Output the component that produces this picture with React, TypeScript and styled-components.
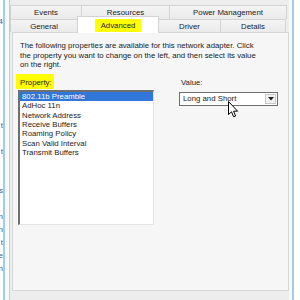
import React from "react";
import styled, { createGlobalStyle } from "styled-components";

const GlobalStyle = createGlobalStyle`
  html, body {
    margin: 0;
    padding: 0;
    width: 300px;
    height: 300px;
    overflow: hidden;
    background: #ffffff;
  }
  body {
    font-family: "Liberation Sans", Arial, sans-serif;
  }
`;

const Screen = styled.div`
  position: relative;
  display: flex;
  width: 300px;
  height: 300px;
  background: #ffffff;
  font-size: 7.8px;
  color: #1b1b1b;
`;

const BehindWindow = styled.div`
  width: 3px;
  height: 300px;
  overflow: hidden;
  display: flex;
  flex-direction: column;
  align-items: flex-end;
  padding-top: 18px;
  box-sizing: border-box;
  gap: 5px;
  color: #4a5a6a;
  font-size: 8px;
  line-height: 8px;
`;

const Fragment = styled.div`
  white-space: nowrap;
  display: flex;
  justify-content: flex-end;
  width: 3px;
`;

const WindowEdge = styled.div`
  width: 2px;
  background: #a3cbeb;
`;

const Gutter = styled.div<{ $w: number }>`
  width: ${(p) => p.$w}px;
  background: #f9f9f9;
`;

const Dialog = styled.div`
  width: 280px;
  box-sizing: border-box;
  border-left: 1px solid #c9c9c9;
  background: #ededed;
  padding-top: 5px;
  display: flex;
  flex-direction: column;
`;

const TabRow = styled.div<{ $h: number }>`
  display: flex;
  height: ${(p) => p.$h}px;
`;

const Tab = styled.div<{ $w: number; $active?: boolean }>`
  width: ${(p) => p.$w}px;
  box-sizing: border-box;
  display: flex;
  align-items: center;
  justify-content: center;
  border-top: 1px solid #d3d3d3;
  border-right: 1px solid #d3d3d3;
  background: ${(p) => (p.$active ? "#ffffff" : "linear-gradient(#f4f4f4, #eaeaea)")};
  height: ${(p) => (p.$active ? "17px" : "100%")};
  margin-top: ${(p) => (p.$active ? "-3px" : "0")};
  position: ${(p) => (p.$active ? "relative" : "static")};
  z-index: ${(p) => (p.$active ? 1 : "auto")};
  border-left: ${(p) => (p.$active ? "1px solid #d3d3d3" : "none")};
  margin-left: ${(p) => (p.$active ? "-1px" : "0")};
  &:first-child {
    border-left: 1px solid #d3d3d3;
  }
`;

const Marker = styled.span`
  background: #ffff00;
  line-height: 13px;
  padding: 0 5.5px;
`;

const Panel = styled.div`
  margin-left: 2px;
  width: 277px;
  height: 259px;
  box-sizing: border-box;
  border: 1px solid #d6d6d6;
  background: #f6f6f6;
  padding: 8px 5px 0 5px;
  display: flex;
  flex-direction: column;
`;

const Description = styled.div`
  margin-left: 2px;
  line-height: 9.6px;
  white-space: nowrap;
`;

const Body = styled.div`
  display: flex;
  margin-top: 4px;
`;

const Column = styled.div<{ $w: number; $ml?: number }>`
  width: ${(p) => p.$w}px;
  margin-left: ${(p) => p.$ml ?? 0}px;
  display: flex;
  flex-direction: column;
  align-items: flex-start;
`;

const FieldLabel = styled.span<{ $mark?: boolean }>`
  line-height: 13px;
  padding: 2px 2px 0 4px;
  margin-left: -2px;
  background: ${(p) => (p.$mark ? "#ffff00" : "transparent")};
`;

const ListBox = styled.div`
  margin-top: 1px;
  width: 136px;
  height: 135px;
  box-sizing: border-box;
  background: #ffffff;
  border-top: 2px solid #6f6f6f;
  border-left: 2px solid #6f6f6f;
  border-right: 1px solid #e4e4e4;
  border-bottom: 1px solid #e4e4e4;
`;

const ListItem = styled.div<{ $selected?: boolean }>`
  height: 9.4px;
  line-height: 9.4px;
  padding-left: 2px;
  background: ${(p) => (p.$selected ? "#3176d9" : "transparent")};
  color: ${(p) => (p.$selected ? "#ffffff" : "#1b1b1b")};
`;

const Combo = styled.div`
  margin-top: 3px;
  width: 99px;
  height: 14px;
  box-sizing: border-box;
  border: 1px solid #6e6e6e;
  background: #ffffff;
  display: flex;
  align-items: center;
`;

const ComboText = styled.span`
  flex: 1;
  padding-left: 3px;
  line-height: 12px;
`;

const ComboButton = styled.div`
  width: 11px;
  height: 10px;
  margin-right: 1px;
  box-sizing: border-box;
  border: 1px solid #c8c8c8;
  background: #f2f2f2;
  display: flex;
  align-items: center;
  justify-content: center;
`;

const Pointer = styled.svg`
  position: absolute;
  left: 228px;
  top: 101px;
`;

const topTabs = [
  { label: "Events", w: 72 },
  { label: "Resources", w: 88 },
  { label: "Power Management", w: 117 },
];

const bottomTabs = [
  { label: "General", w: 68 },
  { label: "Advanced", w: 82, active: true },
  { label: "Driver", w: 62 },
  { label: "Details", w: 65 },
];

const properties = [
  "802.11b Preamble",
  "AdHoc 11n",
  "Network Address",
  "Receive Buffers",
  "Roaming Policy",
  "Scan Valid Interval",
  "Transmit Buffers",
];

const fragments = ["4", "", "", "", "", "", "", "", "t", "", "t", "", "", "s", "", "n", "h", "t", "e", "n"];

export default function App() {
  return (
    <>
      <GlobalStyle />
      <Screen>
        <BehindWindow>
          {fragments.map((f, i) => (
            <Fragment key={i}>{f || "\u00a0"}</Fragment>
          ))}
        </BehindWindow>
        <WindowEdge />
        <Gutter $w={4} />
        <Dialog>
          <TabRow $h={14}>
            {topTabs.map((t) => (
              <Tab key={t.label} $w={t.w}>
                {t.label}
              </Tab>
            ))}
          </TabRow>
          <TabRow $h={13}>
            {bottomTabs.map((t) => (
              <Tab key={t.label} $w={t.w} $active={t.active}>
                {t.active ? <Marker>{t.label}</Marker> : t.label}
              </Tab>
            ))}
          </TabRow>
          <Panel>
            <Description>
              The following properties are available for this network adapter. Click
              <br />
              the property you want to change on the left, and then select its value
              <br />
              on the right.
            </Description>
            <Body>
              <Column $w={136}>
                <FieldLabel $mark>Property:</FieldLabel>
                <ListBox>
                  {properties.map((p, i) => (
                    <ListItem key={p} $selected={i === 0}>
                      {p}
                    </ListItem>
                  ))}
                </ListBox>
              </Column>
              <Column $w={99} $ml={25}>
                <FieldLabel>Value:</FieldLabel>
                <Combo>
                  <ComboText>Long and Short</ComboText>
                  <ComboButton>
                    <svg width="6" height="4" viewBox="0 0 6 4">
                      <path d="M0 0 H6 L3 3.5 Z" fill="#222" />
                    </svg>
                  </ComboButton>
                </Combo>
              </Column>
            </Body>
          </Panel>
        </Dialog>
        <Gutter $w={3} />
        <WindowEdge />
      </Screen>
      <Pointer width="11" height="17" viewBox="0 0 11 17">
        <path
          d="M0.5 0.5 L0.5 13.5 L3.5 10.8 L5.6 15.8 L7.6 15 L5.6 10.2 L9.6 10.2 Z"
          fill="#ffffff"
          stroke="#000000"
          strokeWidth="1"
          strokeLinejoin="round"
        />
      </Pointer>
    </>
  );
}
